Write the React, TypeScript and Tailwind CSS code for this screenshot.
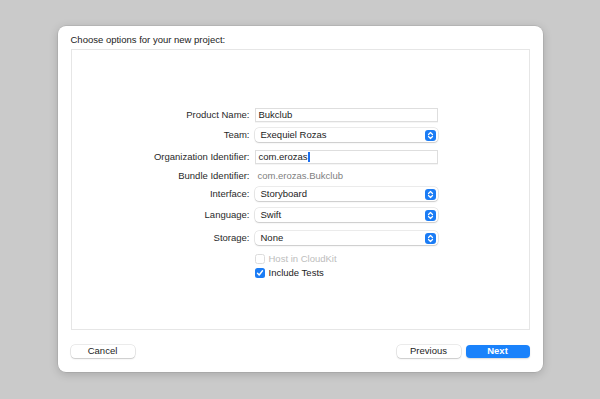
import React from "react";

const font = { fontFamily: "'Liberation Sans', Arial, sans-serif" };

const Stepper = () => (
  <span className="flex h-[11px] w-[11px] items-center justify-center rounded-[3px] bg-[#1b7cf5]">
    <svg width="7" height="9" viewBox="0 0 7 9" fill="none" stroke="white" strokeWidth="1.2" strokeLinecap="round" strokeLinejoin="round">
      <path d="M1.5 3.5 L3.5 1.5 L5.5 3.5" />
      <path d="M1.5 5.5 L3.5 7.5 L5.5 5.5" />
    </svg>
  </span>
);

const Row = ({ label, children, mt }: { label: string; children: React.ReactNode; mt: string }) => (
  <div className={`flex h-[14px] items-center ${mt}`}>
    <div className="w-[183px] pr-[5px] text-right text-[9.5px] text-[#2a2a2a]">{label}</div>
    <div className="w-[183px]">{children}</div>
  </div>
);

const Field = ({ value, caret }: { value: string; caret?: boolean }) => (
  <div className="flex h-[14px] items-center border border-[#dedede] bg-white pl-[3px] text-[9.5px] text-[#1c1c1c] shadow-[0_1px_0_rgba(0,0,0,0.04)]">
    {value}
    {caret && <span className="ml-[0.5px] inline-block h-[10px] w-[1.5px] bg-[#1b6ff0]" />}
  </div>
);

const Popup = ({ value }: { value: string }) => (
  <div className="flex h-[14px] items-center justify-between rounded-[4px] bg-white pl-[6px] pr-[2px] text-[9.5px] text-[#1c1c1c] shadow-[0_0_0_0.5px_rgba(0,0,0,0.15),0_1px_1.5px_rgba(0,0,0,0.15)]">
    <span>{value}</span>
    <Stepper />
  </div>
);

export default function App() {
  return (
    <div style={font} className="flex h-[399px] w-[600px] items-start justify-center bg-[#cacaca] pt-[26px]">
      <div className="flex h-[346px] w-[485px] flex-col rounded-[8px] bg-white px-[13px] shadow-[0_2px_10px_rgba(0,0,0,0.18),0_0_0_0.5px_rgba(0,0,0,0.12)]">
        <div className="pt-[8px] text-[9.5px] leading-[11px] text-[#222]">Choose options for your new project:</div>
        <div className="mt-[4px] h-[281px] border border-[#e6e6e6] bg-white pt-[58px]">
          <Row label="Product Name:" mt="mt-0">
            <Field value="Bukclub" />
          </Row>
          <Row label="Team:" mt="mt-[6px]">
            <Popup value="Exequiel Rozas" />
          </Row>
          <Row label="Organization Identifier:" mt="mt-[8px]">
            <Field value="com.erozas" caret />
          </Row>
          <Row label="Bundle Identifier:" mt="mt-[5px]">
            <div className="pl-[3px] text-[9.5px] text-[#808080]">com.erozas.Bukclub</div>
          </Row>
          <Row label="Interface:" mt="mt-[4px]">
            <Popup value="Storyboard" />
          </Row>
          <Row label="Language:" mt="mt-[7px]">
            <Popup value="Swift" />
          </Row>
          <Row label="Storage:" mt="mt-[9px]">
            <Popup value="None" />
          </Row>
          <div className="ml-[183px] mt-[8px] flex h-[12px] items-center gap-[4px] text-[9.5px] text-[#bdbdbd]">
            <span className="h-[10px] w-[10px] rounded-[2.5px] border border-[#dcdcdc] bg-white" />
            Host in CloudKit
          </div>
          <div className="ml-[183px] mt-[2px] flex h-[12px] items-center gap-[4px] text-[9.5px] text-[#1c1c1c]">
            <span className="flex h-[10px] w-[10px] items-center justify-center rounded-[2.5px] bg-[#1b7cf5]">
              <svg width="8" height="8" viewBox="0 0 8 8" fill="none" stroke="white" strokeWidth="1.4" strokeLinecap="round" strokeLinejoin="round">
                <path d="M1.5 4.2 L3.2 6 L6.5 1.8" />
              </svg>
            </span>
            Include Tests
          </div>
        </div>
        <div className="mt-[15px] flex items-center justify-between">
          <button className="flex h-[13px] w-[64px] items-center justify-center rounded-[4px] bg-white text-[9.5px] text-[#1c1c1c] shadow-[0_0_0_0.5px_rgba(0,0,0,0.15),0_1px_1.5px_rgba(0,0,0,0.15)]">
            Cancel
          </button>
          <div className="flex gap-[5px]">
            <button className="flex h-[13px] w-[64px] items-center justify-center rounded-[4px] bg-white text-[9.5px] text-[#1c1c1c] shadow-[0_0_0_0.5px_rgba(0,0,0,0.15),0_1px_1.5px_rgba(0,0,0,0.15)]">
              Previous
            </button>
            <button className="flex h-[13px] w-[64px] items-center justify-center rounded-[4px] bg-[#1a82fb] text-[9.5px] font-bold text-white shadow-[0_1px_1.5px_rgba(0,0,0,0.15)]">
              Next
            </button>
          </div>
        </div>
      </div>
    </div>
  );
}
